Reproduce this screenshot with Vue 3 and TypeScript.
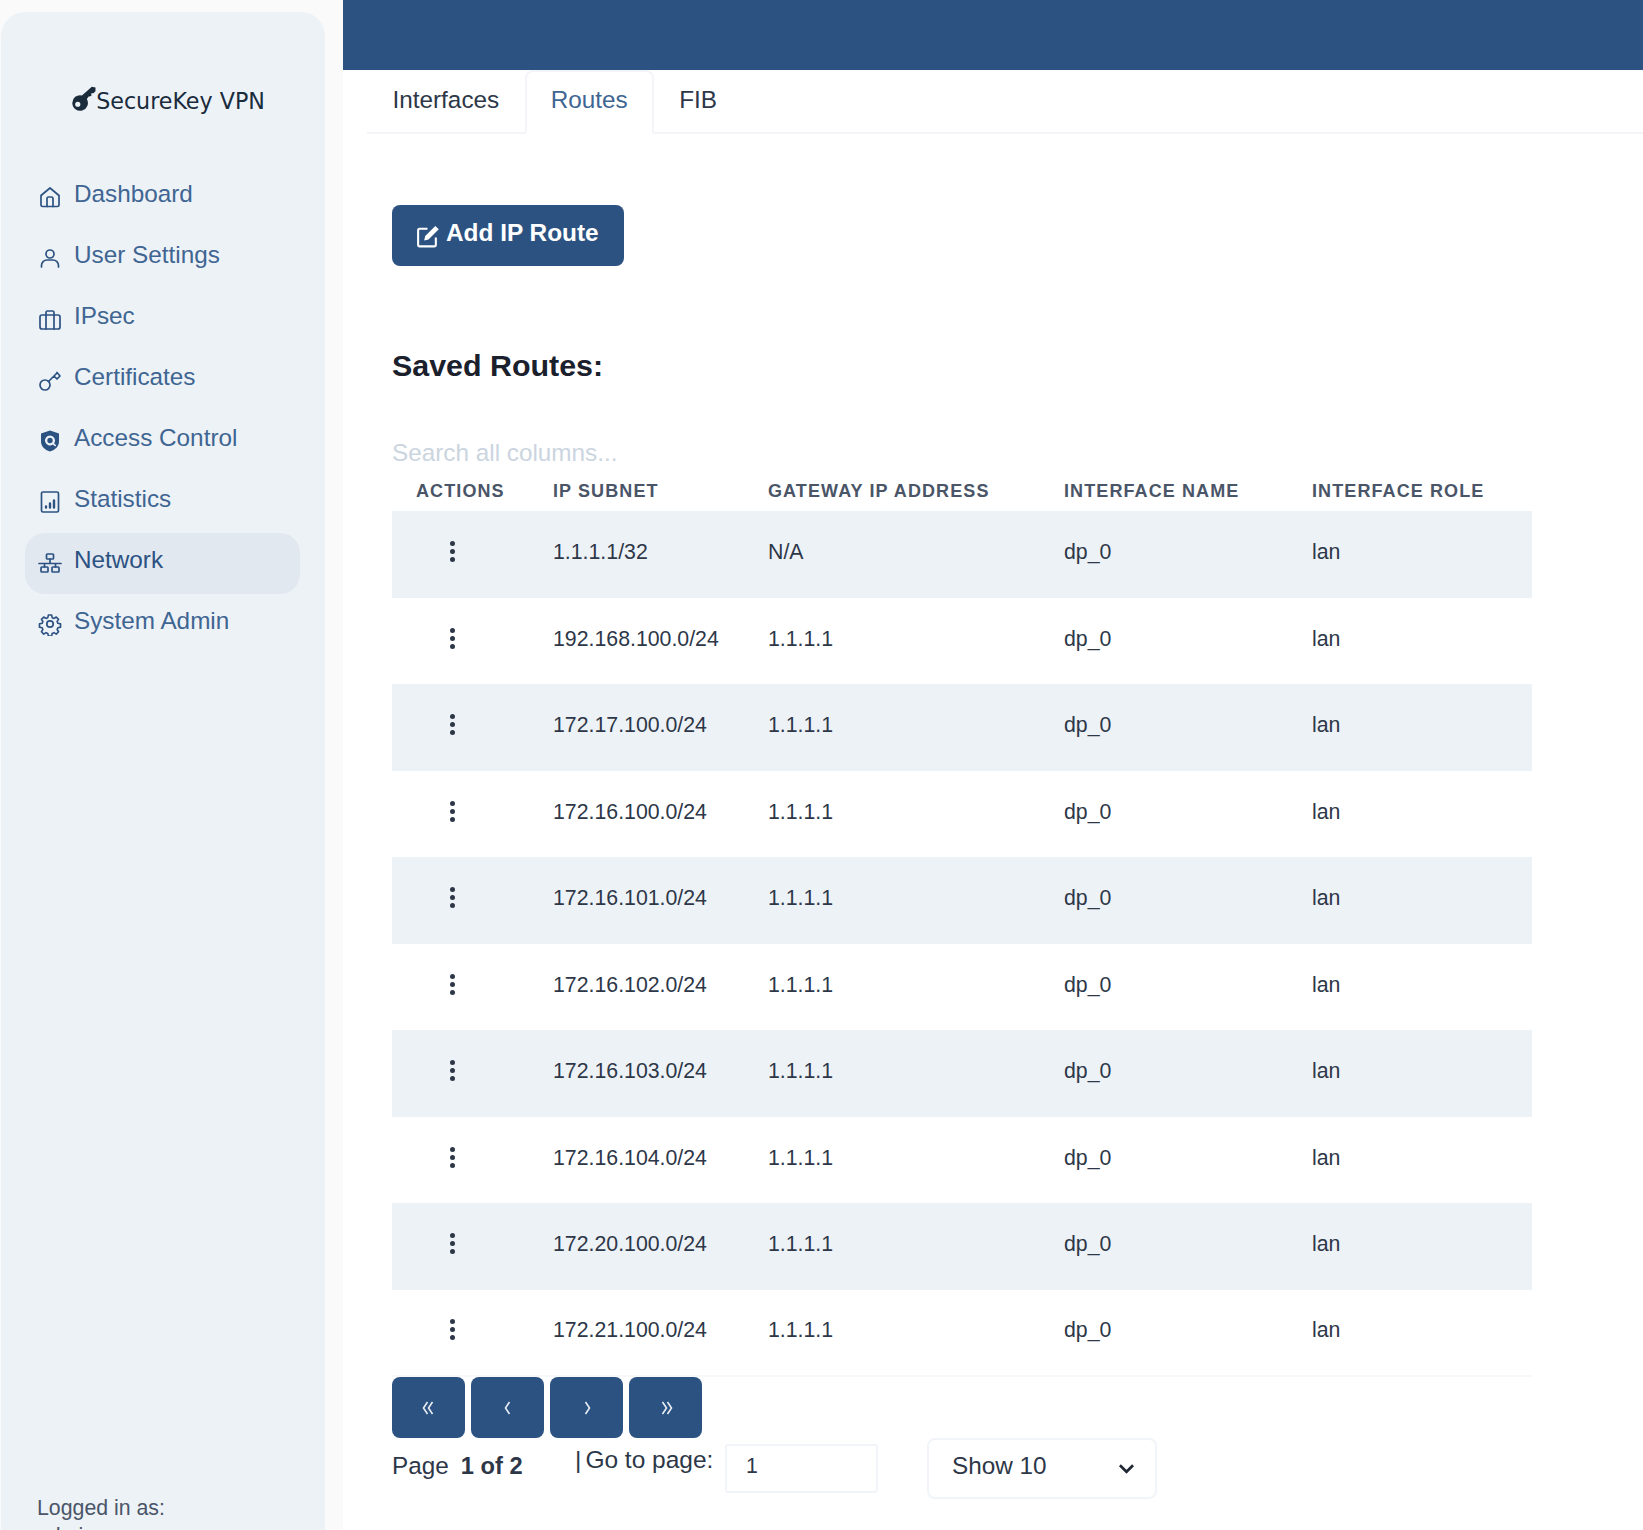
<script setup lang="ts">
interface NavItem { label: string; icon: string; active?: boolean }
interface Route { subnet: string; gateway: string }

const nav: NavItem[] = [
  { label: 'Dashboard', icon: 'home' },
  { label: 'User Settings', icon: 'user' },
  { label: 'IPsec', icon: 'case' },
  { label: 'Certificates', icon: 'key' },
  { label: 'Access Control', icon: 'shield' },
  { label: 'Statistics', icon: 'chart' },
  { label: 'Network', icon: 'network', active: true },
  { label: 'System Admin', icon: 'gear' },
];

const routes: Route[] = [
  { subnet: '1.1.1.1/32', gateway: 'N/A' },
  { subnet: '192.168.100.0/24', gateway: '1.1.1.1' },
  { subnet: '172.17.100.0/24', gateway: '1.1.1.1' },
  { subnet: '172.16.100.0/24', gateway: '1.1.1.1' },
  { subnet: '172.16.101.0/24', gateway: '1.1.1.1' },
  { subnet: '172.16.102.0/24', gateway: '1.1.1.1' },
  { subnet: '172.16.103.0/24', gateway: '1.1.1.1' },
  { subnet: '172.16.104.0/24', gateway: '1.1.1.1' },
  { subnet: '172.20.100.0/24', gateway: '1.1.1.1' },
  { subnet: '172.21.100.0/24', gateway: '1.1.1.1' },
];

// chevron paths for first / prev / next / last
const pager = [
  'M7.500 3 3.500 9l4 6M12.500 3l-4 6 4 6',
  'M10.500 3 6.500 9l4 6',
  'M7.500 3l4 6-4 6',
  'M5.500 3l4 6-4 6M10.500 3l4 6-4 6',
];
</script>

<template>
  <div class="page">
    <div class="side-wrap">
      <aside class="sidebar">
        <div class="brand">
          <svg class="brand-key" viewBox="0 0 24 24"><path fill-rule="evenodd" d="M20 .8 23.500 1.500V5L21.500 7H19.500V9.500L17 10 15.200 12.500A7.500 7.500 0 1 1 10.500 9zM6.500 15a2.500 2.500 0 1 0 0 5 2.500 2.500 0 0 0 0-5z" /></svg>
          <span>SecureKey VPN</span>
        </div>
        <nav class="nav">
          <a v-for="item in nav" :key="item.label" class="nav-item" :class="{ active: item.active }">
            <svg class="nav-icon" viewBox="0 0 24 24">
              <template v-if="item.icon === 'home'">
                <path d="M3 10.500 12 3l9 7.500V20a1.500 1.500 0 0 1-1.500 1.500h-15A1.500 1.500 0 0 1 3 20z" />
                <path d="M9 21.500V13.500a1.500 1.500 0 0 1 1.500-1.500h3a1.500 1.500 0 0 1 1.500 1.500v8" />
              </template>
              <template v-else-if="item.icon === 'user'">
                <circle cx="12" cy="8" r="4" />
                <path d="M3.500 21v-1.500A5.500 5.500 0 0 1 9 14h6a5.500 5.500 0 0 1 5.500 5.500V21" />
              </template>
              <template v-else-if="item.icon === 'case'">
                <rect x="2" y="8" width="20" height="14" rx="2" />
                <path d="M8 22V5.500A1.500 1.500 0 0 1 9.500 4h5A1.500 1.500 0 0 1 16 5.500V22" />
              </template>
              <template v-else-if="item.icon === 'key'">
                <circle cx="7" cy="17" r="5" />
                <path d="M10.500 13.500 19 5M16 8l3 3 3-3-3-3.500" />
              </template>
              <template v-else-if="item.icon === 'shield'">
                <path class="solid" fill-rule="evenodd" d="M12 1.500 21 4.500v8c0 4.500-3.500 8.500-9 10-5.500-1.500-9-5.500-9-10v-8zM12 6.500a5 5 0 1 0 2.900 9.100l2.300 1.900 1-1.200-2.100-1.900A5 5 0 0 0 12 6.500zm0 2.300a2.700 2.700 0 1 1 0 5.400 2.700 2.700 0 0 1 0-5.400z" />
              </template>
              <template v-else-if="item.icon === 'chart'">
                <rect x="3.500" y="2" width="17" height="20" rx="1.500" />
                <path class="bars" d="M8 17.500v-1M12 17.500v-4M16 17.500v-7" />
              </template>
              <template v-else-if="item.icon === 'network'">
                <rect x="8.500" y="3" width="7" height="5" rx=".8" />
                <rect x="3" y="16" width="7" height="5" rx=".8" />
                <rect x="14" y="16" width="7" height="5" rx=".8" />
                <path d="M12 8v4.500M1 12.500h22M6.500 12.500V16M17.500 12.500V16" />
              </template>
              <template v-else>
                <circle cx="12" cy="12" r="3.200" />
                <path d="M10.300 2.500h3.400l.6 2.800 1.900.8 2.400-1.500 2.400 2.400-1.500 2.400.8 1.900 2.800.6v3.400l-2.800.6-.8 1.900 1.500 2.400-2.400 2.400-2.400-1.500-1.900.8-.6 2.800h-3.400l-.6-2.800-1.900-.8-2.400 1.500-2.400-2.400 1.500-2.400-.8-1.900-2.800-.6v-3.400l2.800-.6.8-1.900-1.500-2.400 2.400-2.400 2.400 1.500 1.900-.8z" transform="translate(.6 .6) scale(.95)" />
              </template>
            </svg>
            <span>{{ item.label }}</span>
          </a>
        </nav>
        <div class="logged">
          <div>Logged in as:</div>
          <div>admin</div>
        </div>
      </aside>
    </div>

    <div class="content">
      <header class="topbar" />
      <main class="main">
        <div class="tabs">
          <a class="tab">Interfaces</a>
          <a class="tab current">Routes</a>
          <a class="tab">FIB</a>
        </div>

        <button class="add-btn" type="button">
          <svg viewBox="0 0 24 24" class="add-icon">
            <path d="M12 4.500H4.500A1.500 1.500 0 0 0 3 6v14a1.500 1.500 0 0 0 1.500 1.500h14A1.500 1.500 0 0 0 20 20v-7" />
            <path class="fill" d="M19.500 1.800 22.800 5 13 14.800l-4.200 1 1-4.300z" />
          </svg>
          <span>Add IP Route</span>
        </button>

        <h2 class="title">Saved Routes:</h2>

        <input class="search" type="text" placeholder="Search all columns..." />

        <table class="routes">
          <colgroup>
            <col class="c1" />
            <col class="c2" />
            <col class="c3" />
            <col class="c4" />
            <col class="c5" />
          </colgroup>
          <thead>
            <tr>
              <th>Actions</th>
              <th>IP Subnet</th>
              <th>Gateway IP Address</th>
              <th>Interface Name</th>
              <th>Interface Role</th>
            </tr>
          </thead>
          <tbody>
            <tr v-for="r in routes" :key="r.subnet">
              <td>
                <span class="kebab"><i /><i /><i /></span>
              </td>
              <td>{{ r.subnet }}</td>
              <td>{{ r.gateway }}</td>
              <td>dp_0</td>
              <td>lan</td>
            </tr>
          </tbody>
        </table>

        <div class="pager">
          <button v-for="p in pager" :key="p" class="page-btn" type="button">
            <svg viewBox="0 0 18 18" class="pg-icon"><path :d="p" /></svg>
          </button>
        </div>

        <div class="page-row">
          <span class="page-label">Page<b>1 of 2</b></span>
          <span class="goto"><i class="pipe">|</i>Go to page:</span>
          <input class="page-input" type="text" value="1" />
          <div class="show">
            <span>Show 10</span>
            <svg viewBox="0 0 16 16" class="chev"><path d="M3 5.500 8 10.500 13 5.500" /></svg>
          </div>
        </div>
      </main>
    </div>
  </div>
</template>

<style>
html, body { background: #fff; }
</style>

<style scoped>
.page {
  position: relative;
  display: flex;
  height: 1530px;
  overflow: hidden;
  font-family: "Liberation Sans", Arial, sans-serif;
  color: #2d3748;
  background: #fff;
}
.side-wrap {
  width: 343px;
  flex: none;
  padding: 12px 18px 0 1px;
  box-sizing: border-box;
  background: #fafafa;
}
.sidebar {
  height: 1560px;
  background: #edf2f7;
  border-radius: 24px 24px 0 0;
  padding: 73px 24px 0;
  box-sizing: border-box;
}
.brand {
  display: flex;
  justify-content: center;
  align-items: center;
  font-family: "DejaVu Sans", sans-serif;
  font-size: 22.200px;
  color: #1a2b3c;
  height: 32px;
  padding-left: 10px;
}
.brand-key {
  width: 25px;
  height: 25px;
  fill: #1a2b3c;
  margin-bottom: 6px;
}
.nav {
  margin-top: 50px;
}
.nav-item {
  display: flex;
  gap: 12px;
  height: 61px;
  padding-left: 13px;
  border-radius: 20px;
  font-size: 24.300px;
  line-height: 53px;
  color: #3f6592;
  width: 275px;
  box-sizing: border-box;
}
.nav-item.active {
  background: #e2e8f0;
  color: #2c5282;
}
.nav-icon {
  width: 24px;
  height: 24px;
  flex: none;
  margin-top: 18px;
  fill: none;
  stroke: #2c5282;
  stroke-width: 1.700;
  stroke-linejoin: round;
  stroke-linecap: round;
}
.nav-icon .solid {
  fill: #2c5282;
  stroke: none;
}
.nav-icon .bars {
  stroke-width: 2.400;
}
.logged {
  position: absolute;
  left: 37px;
  top: 1494px;
  font-size: 21.300px;
  line-height: 28px;
  color: #4a5568;
}
.content {
  flex: 1;
  min-width: 0;
}
.topbar {
  height: 70px;
  background: #2c5282;
}
.main {
  padding: 0 0 0 24px;
}
.tabs {
  display: flex;
  height: 64px;
  border-bottom: 2px solid #f3f5f9;
  box-sizing: border-box;
}
.tab {
  padding: 0 25.500px;
  font-size: 24.300px;
  line-height: 59px;
  color: #2d3748;
  height: 64px;
  box-sizing: border-box;
}
.tab.current {
  color: #3f6592;
  background: #fff;
  border: 2px solid #f3f5f9;
  border-bottom-color: #fff;
  border-radius: 8px 8px 0 0;
  line-height: 55px;
  padding: 0 24px;
}
.add-btn {
  display: flex;
  align-items: center;
  gap: 6px;
  margin: 71px 0 0 25px;
  width: 232px;
  height: 61px;
  padding: 0 0 6px 23px;
  border: 0;
  border-radius: 8px;
  background: #2c5282;
  color: #fff;
  font: 700 24.400px "Liberation Sans", sans-serif;
}
.add-icon {
  width: 25px;
  height: 25px;
  margin-top: 8px;
  fill: none;
  stroke: #fff;
  stroke-width: 2;
}
.add-icon .fill {
  fill: #fff;
  stroke: none;
}
.title {
  margin: 81px 0 0 25px;
  font-size: 30.400px;
  line-height: 36px;
  font-weight: 700;
  color: #1a202c;
}
.search {
  display: block;
  margin: 54px 0 0 25px;
  padding: 0;
  width: 600px;
  height: 32px;
  border: 0;
  outline: 0;
  font: 24.300px "Liberation Sans", sans-serif;
  background: transparent;
}
.search::placeholder {
  color: #cbd5e0;
  opacity: 1;
}
.routes {
  margin: 0 0 0 25px;
  width: 1140px;
  table-layout: fixed;
  border-collapse: collapse;
  border-bottom: 2px solid #f6f8fa;
}
.c1 { width: 137px; }
.c2 { width: 215px; }
.c3 { width: 296px; }
.c4 { width: 248px; }
.c5 { width: 244px; }
.routes th {
  height: 42px;
  padding: 3px 0 0 24px;
  box-sizing: border-box;
  text-align: left;
  font-size: 18px;
  font-weight: 700;
  letter-spacing: 1.100px;
  text-transform: uppercase;
  color: #4a5568;
}
.routes td {
  height: 86.500px;
  padding: 0 0 3px 24px;
  box-sizing: border-box;
  font-size: 21.300px;
  color: #2d3748;
}
.routes tbody tr:nth-child(odd) {
  background: #edf2f7;
}
.kebab {
  display: flex;
  flex-direction: column;
  gap: 3px;
  margin: -2px 0 0 34px;
  width: 5px;
}
.kebab i {
  width: 5px;
  height: 5px;
  border-radius: 50%;
  background: #2d3748;
}
.pager {
  display: flex;
  gap: 6px;
  margin-left: 25px;
}
.page-btn {
  display: flex;
  align-items: center;
  justify-content: center;
  width: 73px;
  height: 61px;
  border: 0;
  border-radius: 8px;
  background: #2c5282;
  padding: 0;
}
.pg-icon {
  width: 18px;
  height: 18px;
  fill: none;
  stroke: #e8edf3;
  stroke-width: 1.600;
}
.page-row {
  display: flex;
  margin: -1px 0 0 25px;
  align-items: flex-start;
}
.page-label {
  margin-top: 14px;
  font-size: 24.300px;
  line-height: 30px;
  white-space: nowrap;
  width: 183px;
}
.page-label b {
  margin-left: 12px;
  font-size: 23.700px;
}
.goto {
  margin-top: 8px;
  font-size: 24.500px;
  line-height: 30px;
  width: 150px;
  white-space: nowrap;
}
.pipe {
  font-style: normal;
  margin-right: 4px;
}
.page-input {
  width: 153px;
  height: 49px;
  margin-top: 7px;
  padding: 0 0 4px 19px;
  border: 2px solid #f1f4f8;
  border-radius: 3px;
  box-sizing: border-box;
  font: 21.300px "Liberation Sans", sans-serif;
  color: #2d3748;
  outline: 0;
}
.show {
  display: flex;
  align-items: center;
  justify-content: space-between;
  width: 230px;
  height: 61px;
  margin: 1px 0 0 49px;
  padding: 0 18px 6px 23px;
  box-sizing: border-box;
  border: 2px solid #f1f4f8;
  border-radius: 8px;
  font-size: 24.300px;
  color: #2d3748;
}
.chev {
  width: 21px;
  height: 21px;
  margin-top: 6px;
  fill: none;
  stroke: #1f2733;
  stroke-width: 2;
}
</style>
